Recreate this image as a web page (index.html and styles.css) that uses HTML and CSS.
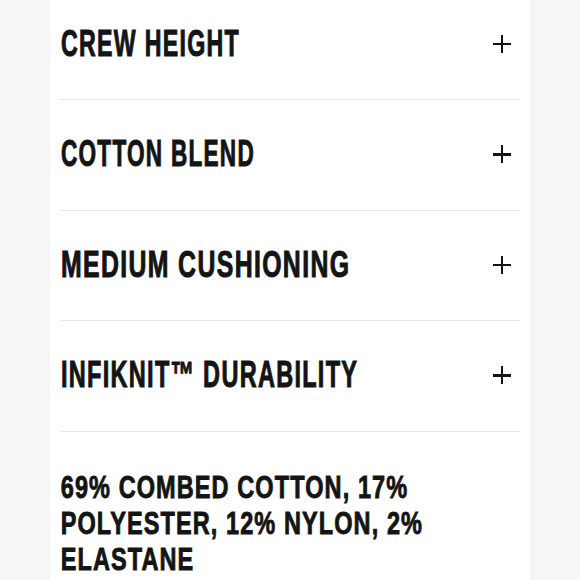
FILE: index.html
```html
<!DOCTYPE html>
<html>
<head>
<meta charset="utf-8">
<link rel="stylesheet" href="styles.css">
</head>
<body>
<div class="panel">
  <div class="row"><span class="title t-crew">CREW HEIGHT</span><span class="plus"></span></div>
  <div class="row"><span class="title t-cotton">COTTON BLEND</span><span class="plus"></span></div>
  <div class="row"><span class="title t-medium">MEDIUM CUSHIONING</span><span class="plus"></span></div>
  <div class="row"><span class="title t-infiknit">INFIKNIT™ DURABILITY</span><span class="plus"></span></div>
  <p class="material">69% COMBED COTTON, 17% POLYESTER, 12% NYLON, 2% ELASTANE</p>
</div>
</body>
</html>
```
FILE: styles.css
```css
html, body {
  margin: 0;
  padding: 0;
  background: #f6f6f6;
  height: 580px;
  overflow: hidden;
}
.panel {
  margin-left: 50px;
  width: 460px;
  padding: 0 10px;
  background: #fff;
  margin-top: -10.5px;
  height: 590.5px;
  box-sizing: content-box;
  font-family: "Liberation Sans", Arial, sans-serif;
  font-weight: bold;
  color: #141414;
}
.row {
  height: 109.5px;
  border-bottom: 1.5px solid #e6e6e6;
  display: flex;
  align-items: center;
  padding-left: 1px;
}
.title {
  flex: 1 1 0;
  min-width: 0;
  font-size: 36px;
  line-height: 1;
  letter-spacing: 2px;
  white-space: nowrap;
  transform: scaleX(0.644);
  transform-origin: left center;
  -webkit-text-stroke: 1px #141414;
  margin-top: -1px;
}
.t-cotton { transform: scaleX(0.627); }
.t-medium { transform: scaleX(0.689); }
.t-infiknit { transform: scaleX(0.652); }
.plus {
  flex: 0 0 18px;
  position: relative;
  width: 18px;
  height: 18px;
  margin-right: 9px;
  margin-top: -1px;
}
.plus::before, .plus::after {
  content: "";
  position: absolute;
  background: #141414;
}
.plus::before {
  left: 0; right: 0; top: 7.75px; height: 2.5px;
}
.plus::after {
  top: 0; bottom: 0; left: 7.75px; width: 2.5px;
}
.material {
  margin: 0;
  padding-top: 37px;
  padding-left: 1px;
  font-size: 32px;
  line-height: 36px;
  letter-spacing: 1.5px;
  width: 500px;
  transform: scaleX(0.734);
  transform-origin: left top;
  -webkit-text-stroke: 0.9px #141414;
}
```
